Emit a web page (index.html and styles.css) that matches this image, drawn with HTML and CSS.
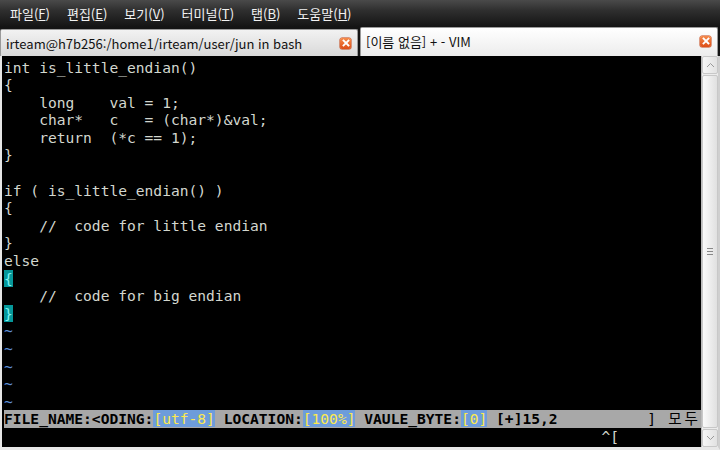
FILE: index.html
```html
<!DOCTYPE html>
<html lang="ko">
<head>
<meta charset="utf-8">
<link rel="stylesheet" href="styles.css">
</head>
<body>
<div class="window">
  <div class="menubar">
    <span class="menu">파일(<u>F</u>)</span>
    <span class="menu">편집(<u>E</u>)</span>
    <span class="menu">보기(<u>V</u>)</span>
    <span class="menu">터미널(<u>T</u>)</span>
    <span class="menu">탭(<u>B</u>)</span>
    <span class="menu">도움말(<u>H</u>)</span>
  </div>
  <div class="tabbar">
    <div class="tab inactive">
      <span class="tab-title">irteam@h7b256:/home1/irteam/user/jun in bash</span>
      <span class="close"><svg width="10" height="10" viewBox="0 0 10 10"><path d="M2.5 2.5 L7.5 7.5 M7.5 2.5 L2.5 7.5" stroke="#fff" stroke-width="1.8" stroke-linecap="square"/></svg></span>
    </div>
    <div class="tab active">
      <span class="tab-title">[이름 없음] + - VIM</span>
      <span class="close"><svg width="10" height="10" viewBox="0 0 10 10"><path d="M2.5 2.5 L7.5 7.5 M7.5 2.5 L2.5 7.5" stroke="#fff" stroke-width="1.8" stroke-linecap="square"/></svg></span>
    </div>
  </div>
  <div class="main">
    <div class="term">
<div class="line">int is_little_endian()</div>
<div class="line">{</div>
<div class="line">    long    val = 1;</div>
<div class="line">    char*   c   = (char*)&amp;val;</div>
<div class="line">    return  (*c == 1);</div>
<div class="line">}</div>
<div class="line"> </div>
<div class="line">if ( is_little_endian() )</div>
<div class="line">{</div>
<div class="line">    //  code for little endian</div>
<div class="line">}</div>
<div class="line">else</div>
<div class="line"><span class="match">{</span></div>
<div class="line">    //  code for big endian</div>
<div class="line"><span class="match">}</span></div>
<div class="line tilde">~</div>
<div class="line tilde">~</div>
<div class="line tilde">~</div>
<div class="line tilde">~</div>
<div class="line tilde">~</div>
<div class="line status"><span>FILE_NAME:&lt;ODING:<span class="hl">[utf-8]</span> LOCATION:<span class="hl">[100%]</span> VAULE_BYTE:<span class="hl">[0]</span> [+]15,2</span><span class="right"><span class="bracket">]</span><span class="ko">모두</span></span></div>
<div class="line">                                                                    ^[</div>
    </div>
    <div class="scrollbar">
      <div class="sb-btn"><svg width="9" height="6" viewBox="0 0 9 6"><path d="M1 5 L4.5 1.5 L8 5" fill="none" stroke="#999" stroke-width="1"/></svg></div>
      <div class="sb-track"><div class="thumb"><span class="grip"></span><span class="grip"></span><span class="grip"></span></div></div>
      <div class="sb-btn"><svg width="9" height="6" viewBox="0 0 9 6"><path d="M1 1 L4.5 4.5 L8 1" fill="none" stroke="#999" stroke-width="1"/></svg></div>
    </div>
  </div>
</div>
</body>
</html>
```
FILE: styles.css
```css
html, body {
  margin: 0;
  padding: 0;
  background: #111;
}
.window {
  width: 720px;
  height: 450px;
  display: flex;
  flex-direction: column;
  overflow: hidden;
  background: #d8d8d8;
}
.menubar {
  height: 27px;
  flex: none;
  display: flex;
  align-items: center;
  padding-left: 10px;
  gap: 17px;
  background: linear-gradient(#4a4a4a 0%, #2e2e2e 40%, #141414 100%);
  font-family: "Noto Sans CJK KR", "Liberation Sans", sans-serif;
  font-size: 13px;
  color: #f2f2f2;
}
.menu u {
  text-decoration: underline;
  text-underline-offset: 1px;
}
.tabbar {
  height: 29px;
  flex: none;
  display: flex;
  align-items: flex-end;
  background: #141414;
  gap: 2px;
}
.tab {
  width: 358px;
  display: flex;
  align-items: center;
  justify-content: space-between;
  padding: 0 6px 0 5px;
  box-sizing: border-box;
  font-family: "Noto Sans CJK KR", "Liberation Sans", sans-serif;
  font-size: 13px;
  color: #111;
  border: 1px solid #9a9a9a;
  border-bottom: none;
  border-radius: 2px 2px 0 0;
}
.tab.inactive {
  height: 27px;
  background: linear-gradient(#f2f2f2, #d9d9d9);
}
.tab.active {
  height: 29px;
  background: linear-gradient(#ffffff, #ececec);
  padding-bottom: 2px;
}
.close {
  width: 11px;
  height: 11px;
  border-radius: 2px;
  background: linear-gradient(#f58a4a, #dd4d16);
  display: flex;
  align-items: center;
  justify-content: center;
  box-shadow: 0 0 0 0.5px #c24010;
}
.main {
  flex: 1;
  display: flex;
  border-bottom: 3px solid #e8e8e8;
  border-right: 2px solid #cfcfcf;
}
.term {
  flex: 1;
  background: #000;
  border-left: 2px solid #e6e6e6;
  padding: 2.5px 0 0 2px;
  font-family: "DejaVu Sans Mono", "Noto Sans CJK KR", monospace;
  font-size: 14.6px;
  color: #d3d7cf;
  overflow: hidden;
}
.line {
  height: 17.6px;
  line-height: 17.6px;
  white-space: pre;
}
.match {
  background: #06989a;
  color: #7ff5f5;
}
.tilde {
  color: #5f8fd8;
}
.status {
  background: #a8a8a8;
  color: #000;
  font-weight: bold;
  display: flex;
  justify-content: space-between;
  padding-right: 0;
}
.status .right {
  font-weight: normal;
  display: flex;
  gap: 12px;
}
.status .ko {
  letter-spacing: 3px;
}
.hl {
  background: #6d9cdb;
  color: #fce94f;
  font-weight: normal;
}
.scrollbar {
  width: 16px;
  flex: none;
  display: flex;
  flex-direction: column;
  background: #ececec;
  border-left: 1px solid #bdbdbd;
}
.sb-btn {
  height: 16px;
  display: flex;
  align-items: center;
  justify-content: center;
  background: linear-gradient(90deg, #f6f6f6, #e2e2e2);
  border: 1px solid #c8c8c8;
  border-radius: 2px;
}
.sb-track {
  flex: 1;
  display: flex;
  padding: 1px 0;
}
.thumb {
  flex: 1;
  background: linear-gradient(90deg, #fafafa, #e0e0e0);
  border: 1px solid #c8c8c8;
  border-radius: 2px;
  display: flex;
  flex-direction: column;
  align-items: center;
  justify-content: center;
  gap: 2px;
}
.grip {
  width: 6px;
  height: 1px;
  background: #888;
}
```
